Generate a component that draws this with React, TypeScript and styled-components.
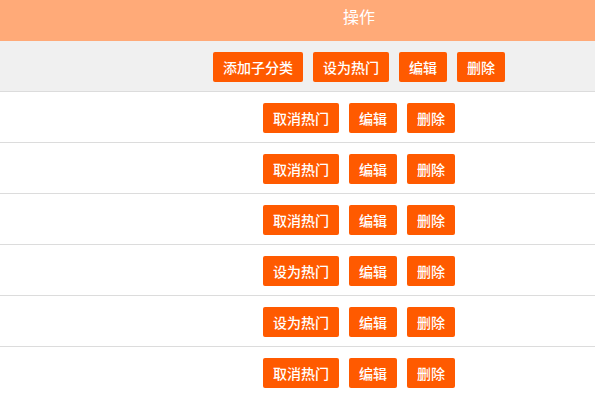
import React from "react"
import styled, { createGlobalStyle } from "styled-components"

const GlobalStyle = createGlobalStyle`
  html, body {
    margin: 0;
    padding: 0;
    background: #fff;
    font-family: "Microsoft YaHei", "Noto Sans CJK SC", "Liberation Sans", sans-serif;
  }
`

interface RowData {
  hot: boolean
}

const rows: RowData[] = [
  { hot: true },
  { hot: true },
  { hot: true },
  { hot: false },
  { hot: false },
  { hot: true },
]

const App: React.FunctionComponent = () => {
  function renderBodyRows() {
    return rows.map((row, index) => (
      <BodyRow key={index}>
        <Spacer />
        <ActionCell>
          <Button>{row.hot ? "取消热门" : "设为热门"}</Button>
          <Button>编辑</Button>
          <Button>删除</Button>
        </ActionCell>
      </BodyRow>
    ))
  }

  return (
    <>
      <GlobalStyle />
      <Table>
        <HeadRow>
          <Spacer />
          <HeadCell>操作</HeadCell>
        </HeadRow>
        <BodyRow $top>
          <Spacer />
          <ActionCell>
            <Button>添加子分类</Button>
            <Button>设为热门</Button>
            <Button>编辑</Button>
            <Button>删除</Button>
          </ActionCell>
        </BodyRow>
        {renderBodyRows()}
      </Table>
    </>
  )
}

const Table = styled.div`
  display: flex;
  flex-direction: column;
  width: 595px;
`

const HeadRow = styled.div`
  display: flex;
  height: 41px;
  background-color: #ffaa78;
`

const Spacer = styled.div`
  width: 123px;
  flex-shrink: 0;
`

const HeadCell = styled.div`
  flex: 1;
  display: flex;
  align-items: center;
  justify-content: center;
  padding-bottom: 10px;
  color: #fff;
  font-size: 16px;
`

const BodyRow = styled.div<{ $top?: boolean }>`
  display: flex;
  height: 50px;
  border-bottom: 1px solid #dcdcdc;
  background-color: ${(p) => (p.$top ? "#f0f0f0" : "#fff")};
`

const ActionCell = styled.div`
  flex: 1;
  display: flex;
  align-items: center;
  justify-content: center;
  gap: 10px;
  padding-top: 2px;
`

const Button = styled.span`
  display: inline-flex;
  align-items: center;
  height: 30px;
  padding: 0 10px;
  border-radius: 2px;
  background-color: #ff5a00;
  color: #fff;
  font-size: 14px;
  font-weight: 500;
  white-space: nowrap;
`

export default App
